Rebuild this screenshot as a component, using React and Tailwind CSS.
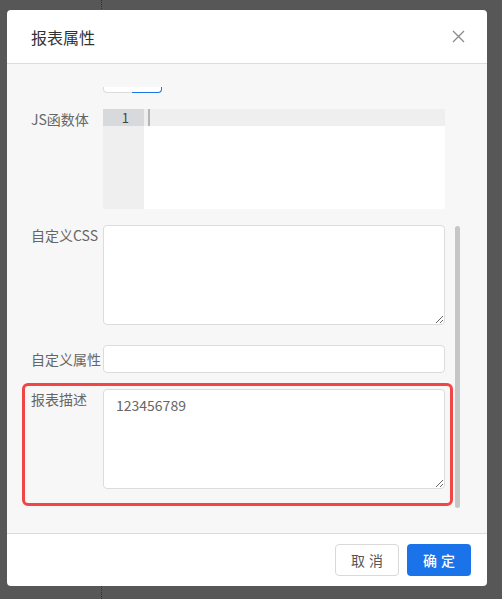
import React from "react";

const font = { fontFamily: '"Noto Sans CJK SC", "Noto Sans", sans-serif' };

const Label = ({ children, className = "" }) => (
  <div className={`w-[72px] shrink-0 text-[14px] text-[#666] whitespace-nowrap ${className}`}>
    {children}
  </div>
);

const CodeEditor = () => (
  <div className="flex w-[342px] h-[100px] bg-white">
    <div className="w-[41px] bg-[#efefef] flex flex-col">
      <div className="h-[17px] bg-[#d8d9dc] text-right pr-[15px] text-[13px] leading-[17px] text-[#444]">
        1
      </div>
    </div>
    <div className="flex-1 flex flex-col">
      <div className="h-[17px] bg-[#efefef] pl-[4px]">
        <div className="w-[2px] h-[17px] bg-[#b5b5b5]" />
      </div>
    </div>
  </div>
);

const Field = ({ label, children, align = "start", labelClass = "leading-5" }) => (
  <div className={`flex ${align === "center" ? "items-center" : "items-start"}`}>
    <Label className={labelClass}>{label}</Label>
    {children}
  </div>
);

export default function App() {
  return (
    <div className="relative h-[599px] bg-[#575757] pt-[10px] pl-[7px]" style={font}>
      <div className="absolute left-[101px] top-0 bottom-0 border-l border-dotted border-[#2f2f2f]" />
      <div className="relative w-[480px] bg-white rounded-[4px] overflow-hidden">
        <div className="h-[54px] flex items-center justify-between pl-[24px] pr-[22px] border-b border-[#dcdcdc]">
          <div className="text-[16px] text-[#333]">报表属性</div>
          <svg width="13" height="13" viewBox="0 0 13 13" className="text-[#8a8a8a]">
            <path d="M1 1 L12 12 M12 1 L1 12" stroke="currentColor" strokeWidth="1.3" fill="none" />
          </svg>
        </div>

        <div className="relative h-[469px] overflow-hidden bg-[#f7f7f7] pl-[24px] pr-[42px] pt-[23px]">
          <div className="flex ml-[72px] mb-[16px]">
            <div className="w-[29px] h-[6px] bg-white border-b border-l border-[#dcdcdc] rounded-bl-[4px]" />
            <div className="w-[30px] h-[6px] bg-white border-b border-r border-[#1a73e8] rounded-br-[4px]" />
          </div>

          <div className="flex flex-col">
            <Field label="JS函数体">
              <CodeEditor />
            </Field>

            <div className="mt-[16px]">
              <Field label="自定义CSS">
                <textarea
                  readOnly
                  className="w-[342px] h-[100px] bg-white border border-[#dcdcdc] rounded-[4px] outline-none resize-y"
                />
              </Field>
            </div>

            <div className="mt-[20px]">
              <Field label="自定义属性" align="center" labelClass="leading-[28px]">
                <input
                  readOnly
                  className="w-[342px] h-[28px] bg-white border border-[#dcdcdc] rounded-[4px] outline-none"
                />
              </Field>
            </div>

            <div className="relative mt-[16px]">
              <Field label="报表描述">
                <textarea
                  readOnly
                  defaultValue="123456789"
                  className="w-[342px] h-[100px] bg-white border border-[#dcdcdc] rounded-[4px] outline-none resize-y px-[12px] py-[5px] text-[14px] leading-5 text-[#666]"
                  style={font}
                />
              </Field>
              <div className="absolute -top-[6px] -left-[9px] -right-[8px] -bottom-[17px] border-[3px] border-[#f24646] rounded-[6px] pointer-events-none" />
            </div>
          </div>

          <div className="absolute right-[27px] top-[162px] w-[5px] h-[282px] rounded-full bg-[#c6c6c6]" />
        </div>

        <div className="h-[53px] border-t border-[#dcdcdc] flex items-start justify-end gap-[8px] pr-[16px] pt-[10px]">
          <button className="w-[64px] h-[32px] bg-white border border-[#d9d9d9] rounded-[4px] text-[14px] text-[#555] tracking-[4px] pl-[4px]">
            取消
          </button>
          <button className="w-[64px] h-[32px] bg-[#1a73e8] rounded-[4px] text-[14px] text-white font-medium tracking-[4px] pl-[4px]">
            确定
          </button>
        </div>
      </div>
    </div>
  );
}
